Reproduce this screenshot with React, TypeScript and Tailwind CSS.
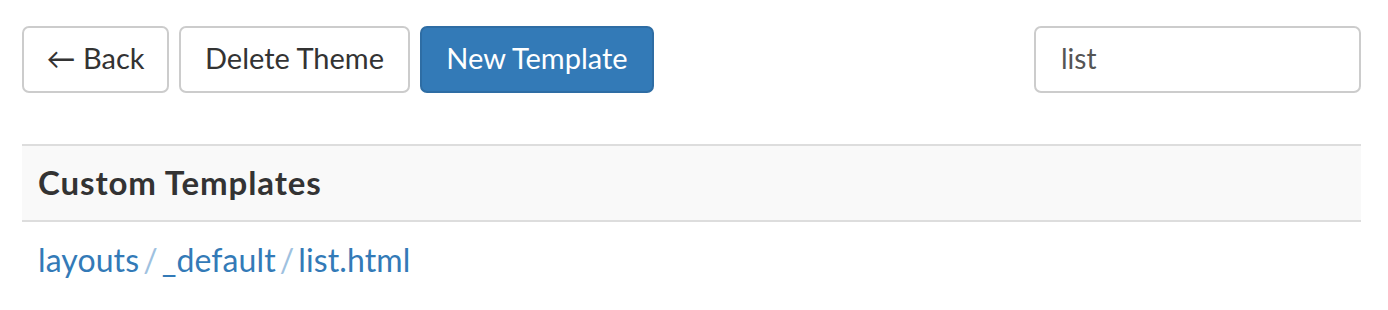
import React from "react";

export default function App() {
  const font = { fontFamily: "Lato, 'Noto Sans', sans-serif" };
  return (
    <div className="w-[1388px] h-[310px] bg-white text-[29px] text-[#333]" style={font}>
      <div className="pl-[22px] pr-[27px] pt-[26px]">
        <div className="flex items-center justify-between">
          <div className="flex gap-[10px]">
            <button className="w-[147px] h-[67px] pb-[4px] flex items-center justify-center border-2 border-[#ccc] rounded-[7px] bg-white text-[#333] text-[29px] leading-[40px]">
              ← Back
            </button>
            <button className="w-[231px] h-[67px] pb-[4px] flex items-center justify-center border-2 border-[#ccc] rounded-[7px] bg-white text-[#333] text-[29px] leading-[40px]">
              Delete Theme
            </button>
            <button className="w-[234px] h-[67px] pb-[4px] flex items-center justify-center border-2 border-[#2e6da4] rounded-[7px] bg-[#337ab7] text-white text-[29px] leading-[40px]">
              New Template
            </button>
          </div>
          <input
            readOnly
            value="list"
            className="w-[327px] h-[67px] px-[25px] pb-[3px] border-2 border-[#ccc] rounded-[7px] text-[#555] text-[28px] outline-none"
            style={font}
          />
        </div>
        <div className="mt-[51px]">
          <div className="border-t-2 border-b-2 border-[#ddd] bg-[#f9f9f9] px-[16px] h-[78px] flex items-center">
            <span className="font-bold text-[33px] tracking-[0.9px] text-[#333]">Custom Templates</span>
          </div>
          <div className="px-[16px] pt-[18px] leading-[40px] text-[#337ab7] text-[32px] tracking-[0.1px]">
            <span>layouts</span>
            <span className="text-[#9ec1e0] mx-[4px]">/</span>
            <span>_default</span>
            <span className="text-[#9ec1e0] mx-[4px]">/</span>
            <span>list.html</span>
          </div>
        </div>
      </div>
    </div>
  );
}
